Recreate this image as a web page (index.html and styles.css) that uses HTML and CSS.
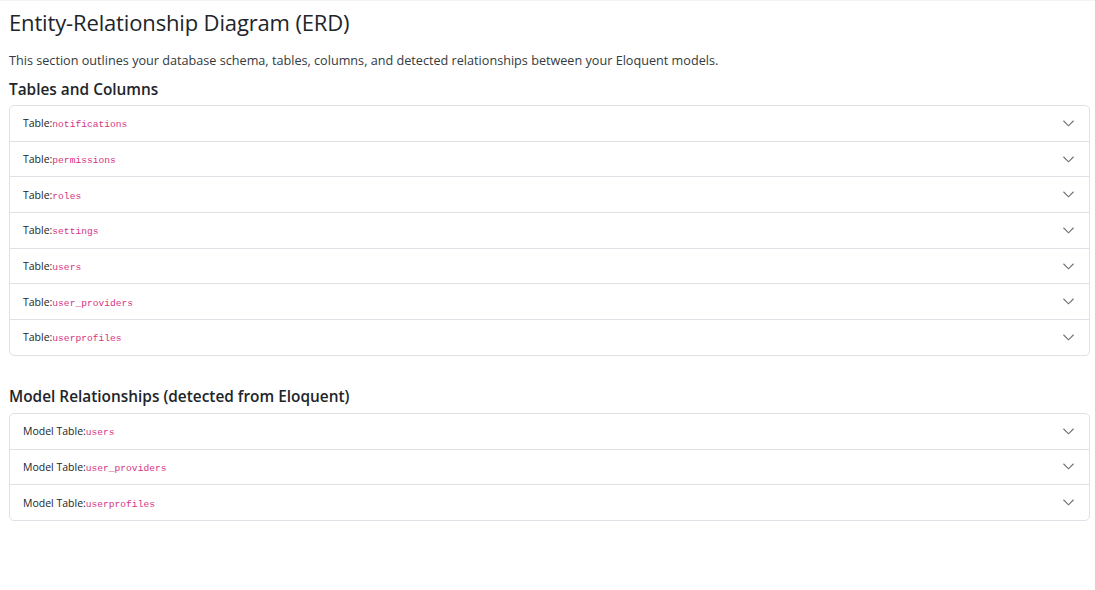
FILE: index.html
```html
<!DOCTYPE html>
<html lang="en">
<head>
<meta charset="utf-8">
<title>ERD</title>
<link rel="stylesheet" href="styles.css">
</head>
<body>
<main class="page">
  <h1 class="title">Entity-Relationship Diagram (ERD)</h1>
  <p class="lead">This section outlines your database schema, tables, columns, and detected relationships between your Eloquent models.</p>

  <h2 class="section-title">Tables and Columns</h2>
  <div class="accordion">
    <div class="acc-item"><span class="label">Table:<code>notifications</code></span><svg class="chev" viewBox="0 0 12 7"><path d="M0.5 0.5 L6 6 L11.5 0.5"/></svg></div>
    <div class="acc-item"><span class="label">Table:<code>permissions</code></span><svg class="chev" viewBox="0 0 12 7"><path d="M0.5 0.5 L6 6 L11.5 0.5"/></svg></div>
    <div class="acc-item"><span class="label">Table:<code>roles</code></span><svg class="chev" viewBox="0 0 12 7"><path d="M0.5 0.5 L6 6 L11.5 0.5"/></svg></div>
    <div class="acc-item"><span class="label">Table:<code>settings</code></span><svg class="chev" viewBox="0 0 12 7"><path d="M0.5 0.5 L6 6 L11.5 0.5"/></svg></div>
    <div class="acc-item"><span class="label">Table:<code>users</code></span><svg class="chev" viewBox="0 0 12 7"><path d="M0.5 0.5 L6 6 L11.5 0.5"/></svg></div>
    <div class="acc-item"><span class="label">Table:<code>user_providers</code></span><svg class="chev" viewBox="0 0 12 7"><path d="M0.5 0.5 L6 6 L11.5 0.5"/></svg></div>
    <div class="acc-item"><span class="label">Table:<code>userprofiles</code></span><svg class="chev" viewBox="0 0 12 7"><path d="M0.5 0.5 L6 6 L11.5 0.5"/></svg></div>
  </div>

  <h2 class="section-title second">Model Relationships (detected from Eloquent)</h2>
  <div class="accordion">
    <div class="acc-item"><span class="label">Model Table:<code>users</code></span><svg class="chev" viewBox="0 0 12 7"><path d="M0.5 0.5 L6 6 L11.5 0.5"/></svg></div>
    <div class="acc-item"><span class="label">Model Table:<code>user_providers</code></span><svg class="chev" viewBox="0 0 12 7"><path d="M0.5 0.5 L6 6 L11.5 0.5"/></svg></div>
    <div class="acc-item"><span class="label">Model Table:<code>userprofiles</code></span><svg class="chev" viewBox="0 0 12 7"><path d="M0.5 0.5 L6 6 L11.5 0.5"/></svg></div>
  </div>
</main>
</body>
</html>
```
FILE: styles.css
```css
html, body {
  margin: 0;
  padding: 0;
  background: #fff;
}
body {
  font-family: "Open Sans", "Noto Sans", sans-serif;
  color: #212529;
  border-top: 1px solid #f3f3f3;
}
.page {
  padding: 0 5px 0 9px;
}
.title {
  margin: 0;
  padding-top: 7px;
  font-size: 22px;
  font-weight: 500;
  line-height: 28px;
  letter-spacing: -0.15px;
}
.lead {
  margin: 16px 0 0;
  font-size: 12.65px;
  line-height: 17px;
  color: #333a40;
}
.section-title {
  margin: 11px 0 0;
  font-size: 15.4px;
  font-weight: 600;
  line-height: 20px;
}
.section-title.second {
  margin-top: 31px;
}
.accordion {
  margin-top: 5px;
  border: 1px solid #dee2e6;
  border-radius: 5px;
  overflow: hidden;
}
.section-title.second + .accordion {
  margin-top: 6px;
}
.acc-item {
  display: flex;
  align-items: center;
  justify-content: space-between;
  height: 34.7px;
  padding: 0 15px 0 13px;
  border-top: 1px solid #dee2e6;
}
.acc-item:first-child {
  border-top: 0;
}
.label {
  font-size: 10.5px;
  color: #212529;
}
code {
  font-family: "Liberation Mono", "DejaVu Sans Mono", monospace;
  font-size: 9.6px;
  color: #d63384;
}
.chev {
  width: 11px;
  height: 7px;
  fill: none;
  stroke: #6c6f73;
  stroke-width: 1.2;
}
```
